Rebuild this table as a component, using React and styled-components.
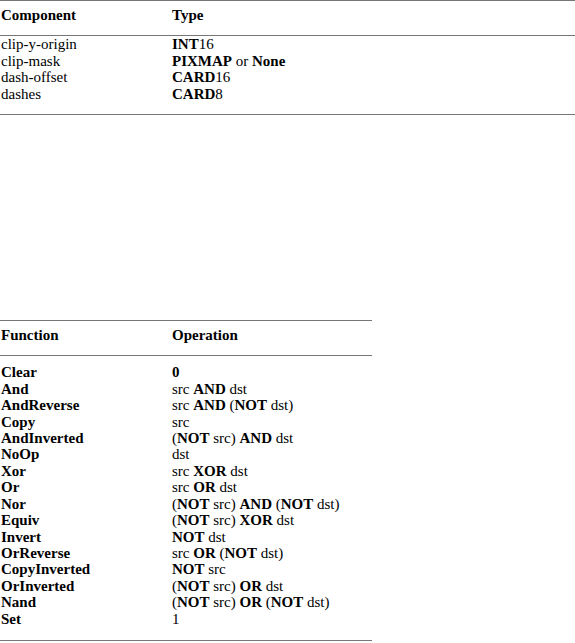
import React from "react";
import styled, { createGlobalStyle } from "styled-components";

const GlobalStyle = createGlobalStyle`
  html, body {
    margin: 0;
    padding: 0;
    background: #ffffff;
  }
  body {
    font-family: "Liberation Serif", "Times New Roman", serif;
    font-size: 15px;
    color: #000000;
  }
`;

const Page = styled.div`
  width: 575px;
  height: 643px;
  display: flex;
  flex-direction: column;
  align-items: flex-start;
  gap: 205px;
  overflow: hidden;
`;

const Table = styled.div`
  width: ${(p) => p.width};
  border-top: 1px solid #767676;
  border-bottom: 1px solid #767676;
  padding-bottom: ${(p) => p.bottomPad}px;
`;

const HeadRow = styled.div`
  display: grid;
  grid-template-columns: 171px 1fr;
  padding: 6px 0 ${(p) => p.headPad}px 1px;
  border-bottom: 1px solid #767676;
  line-height: 16.4px;
  font-weight: bold;
`;

const Body = styled.div`
  padding-top: ${(p) => p.topPad}px;
`;

const Row = styled.div`
  display: grid;
  grid-template-columns: 171px 1fr;
  padding-left: 1px;
  line-height: 16.4px;
  white-space: nowrap;
`;

const Name = styled.span`
  font-weight: ${(p) => (p.bold ? "bold" : "normal")};
`;

const Kw = styled.b`
  font-weight: bold;
`;

const components = [
  [
    "clip-y-origin",
    <>
      <Kw>INT</Kw>16
    </>,
  ],
  [
    "clip-mask",
    <>
      <Kw>PIXMAP</Kw> or <Kw>None</Kw>
    </>,
  ],
  [
    "dash-offset",
    <>
      <Kw>CARD</Kw>16
    </>,
  ],
  [
    "dashes",
    <>
      <Kw>CARD</Kw>8
    </>,
  ],
];

const NOT = <Kw>NOT</Kw>;
const AND = <Kw>AND</Kw>;
const OR = <Kw>OR</Kw>;
const XOR = <Kw>XOR</Kw>;

const functions = [
  ["Clear", <Kw>0</Kw>],
  ["And", <>src {AND} dst</>],
  ["AndReverse", <>src {AND} ({NOT} dst)</>],
  ["Copy", <>src</>],
  ["AndInverted", <>({NOT} src) {AND} dst</>],
  ["NoOp", <>dst</>],
  ["Xor", <>src {XOR} dst</>],
  ["Or", <>src {OR} dst</>],
  ["Nor", <>({NOT} src) {AND} ({NOT} dst)</>],
  ["Equiv", <>({NOT} src) {XOR} dst</>],
  ["Invert", <>{NOT} dst</>],
  ["OrReverse", <>src {OR} ({NOT} dst)</>],
  ["CopyInverted", <>{NOT} src</>],
  ["OrInverted", <>({NOT} src) {OR} dst</>],
  ["Nand", <>({NOT} src) {OR} ({NOT} dst)</>],
  ["Set", <>1</>],
];

const App = () => {
  return (
    <>
      <GlobalStyle />
      <Page>
        <Table width="575px" bottomPad={12}>
          <HeadRow headPad={12}>
            <span>Component</span>
            <span>Type</span>
          </HeadRow>
          <Body topPad={0}>
            {components.map(([name, type]) => (
              <Row key={name}>
                <Name>{name}</Name>
                <span>{type}</span>
              </Row>
            ))}
          </Body>
        </Table>
        <Table width="372px" bottomPad={13}>
          <HeadRow headPad={12}>
            <span>Function</span>
            <span>Operation</span>
          </HeadRow>
          <Body topPad={8}>
            {functions.map(([name, op]) => (
              <Row key={name}>
                <Name bold>{name}</Name>
                <span>{op}</span>
              </Row>
            ))}
          </Body>
        </Table>
      </Page>
    </>
  );
};

export default App;
